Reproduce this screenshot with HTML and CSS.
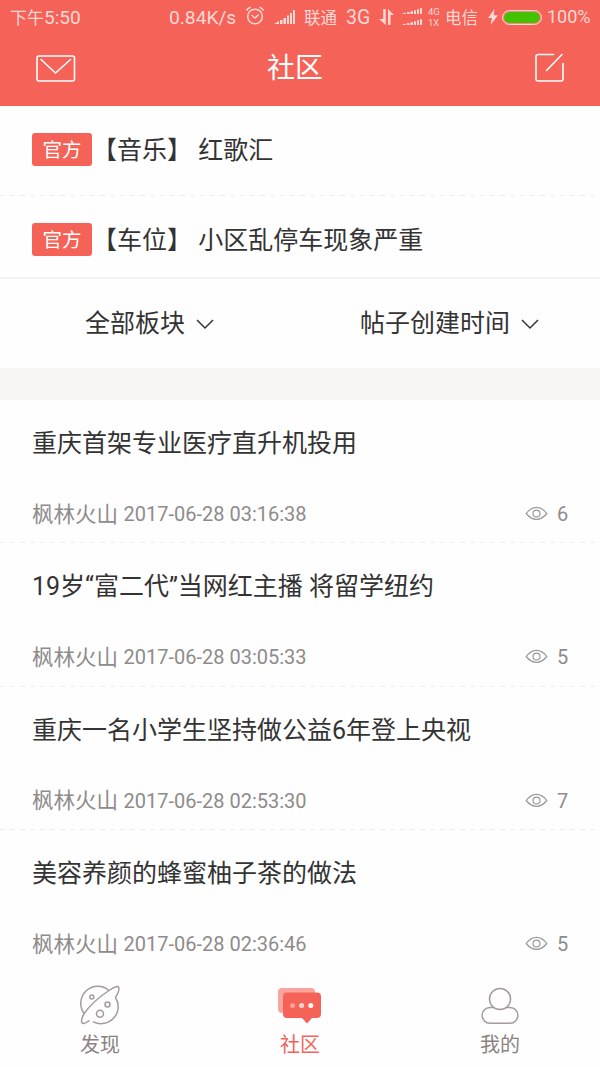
FILE: index.html
```html
<!DOCTYPE html>
<html lang="zh-CN">
<head>
<meta charset="utf-8">
<title>社区</title>
<link rel="stylesheet" href="styles.css">
</head>
<body>
<div class="app">
  <header class="top">
    <div class="status">
      <span class="clock"><span class="cn">下午</span>5:50</span>
      <span class="speed">0.84K/s</span>
      <svg class="alarm" width="20" height="20" viewBox="0 0 20 20" fill="none" stroke="currentColor" stroke-width="1.5"><circle cx="10" cy="10.5" r="7.3"/><path d="M6.5 9l3.5 3 3.7-3.4M1.5 4.5Q3 2 5.700 1.300M18.500 4.500Q17 2 14.300 1.300"/></svg>
      <svg class="signal" width="22" height="16" viewBox="0 0 22 16" fill="currentColor"><path d="M0 15l5-3v3zM6 11h2.500v4H6zM9.500 9H12v6H9.500zM13 6.500h2v8.500h-2zM16 4h2v11h-2zM19 1h2v14h-2z"/></svg>
      <span class="carrier">联通</span>
      <span class="net">3G</span>
      <svg class="arrows" width="16" height="16" viewBox="0 0 16 16" fill="currentColor"><path d="M4.200 0H6.700V16L0 10h4.200zM9 16V0l6 6h-3.500v10z"/></svg>
      <svg class="dual" width="22" height="18" viewBox="0 0 22 18" fill="currentColor"><path id="bars" d="M0 6l5-1.500V6zM6 4h2.500v2H6zM9.500 3.300H12V6H9.500zM13 2.200h2V6h-2zM16 1.200h2V6h-2zM19 .2h2V6h-2z"/><use href="#bars" y="11"/></svg>
      <span class="modes"><span>4G</span><span>1X</span></span>
      <span class="telecom">电信</span>
      <svg class="bolt" width="10" height="16" viewBox="0 0 10 16" fill="currentColor"><path d="M6.500 0L0 9h4L2.500 16 10 6.300H5.800z"/></svg>
      <span class="battery"></span>
      <span class="percent">100%</span>
    </div>
    <div class="nav">
      <svg class="mail" width="40" height="28" viewBox="0 0 40 28" fill="none" stroke="currentColor" stroke-width="1.600" stroke-linecap="round" stroke-linejoin="round"><rect x="1" y="1" width="37.500" height="25" rx="2"/><path d="M5 4.500L19.500 18 34.500 4.500"/></svg>
      <h1>社区</h1>
      <svg class="compose" width="30" height="30" viewBox="0 0 30 30" fill="none" stroke="currentColor" stroke-width="1.600" stroke-linecap="round" stroke-linejoin="round"><path d="M18.500 1.500H3q-2 0-2 2V26q0 2 2 2h23q2 0 2-2V10.500M11.500 17.500L27 1.500"/></svg>
    </div>
  </header>
  <section class="notices">
    <div class="notice"><span class="tag">官方</span><span>【音乐】 红歌汇</span></div>
    <div class="notice"><span class="tag">官方</span><span>【车位】 小区乱停车现象严重</span></div>
  </section>
  <div class="filters">
    <div class="filter">全部板块<svg width="18" height="11" viewBox="0 0 18 11"><path d="M1 1l8 8 8-8"/></svg></div>
    <div class="filter">帖子创建时间<svg width="18" height="11" viewBox="0 0 18 11"><path d="M1 1l8 8 8-8"/></svg></div>
  </div>
  <main class="posts">
    <article class="post"><h2>重庆首架专业医疗直升机投用</h2><div class="meta"><span class="author">枫林火山</span><time>2017-06-28 03:16:38</time><svg class="eye" width="23" height="15" viewBox="0 0 24 16"><path d="M1 8Q6 1.500 12 1.500T23 8Q18 14.300 12 14.300T1 8z"/><circle cx="12" cy="8" r="3.700"/></svg><span class="views">6</span></div></article>
    <article class="post"><h2>19岁“富二代”当网红主播 将留学纽约</h2><div class="meta"><span class="author">枫林火山</span><time>2017-06-28 03:05:33</time><svg class="eye" width="23" height="15" viewBox="0 0 24 16"><path d="M1 8Q6 1.500 12 1.500T23 8Q18 14.300 12 14.300T1 8z"/><circle cx="12" cy="8" r="3.700"/></svg><span class="views">5</span></div></article>
    <article class="post"><h2>重庆一名小学生坚持做公益6年登上央视</h2><div class="meta"><span class="author">枫林火山</span><time>2017-06-28 02:53:30</time><svg class="eye" width="23" height="15" viewBox="0 0 24 16"><path d="M1 8Q6 1.500 12 1.500T23 8Q18 14.300 12 14.300T1 8z"/><circle cx="12" cy="8" r="3.700"/></svg><span class="views">7</span></div></article>
    <article class="post"><h2>美容养颜的蜂蜜柚子茶的做法</h2><div class="meta"><span class="author">枫林火山</span><time>2017-06-28 02:36:46</time><svg class="eye" width="23" height="15" viewBox="0 0 24 16"><path d="M1 8Q6 1.500 12 1.500T23 8Q18 14.300 12 14.300T1 8z"/><circle cx="12" cy="8" r="3.700"/></svg><span class="views">5</span></div></article>
  </main>
  <nav class="tabs">
    <div class="tab"><svg width="44" height="40" viewBox="0 0 44 40" fill="none" stroke="currentColor" stroke-width="1.500" stroke-linecap="round"><path d="M31 5.500A17 17 0 0 0 6.200 28.500M37.500 12.500A17 17 0 0 1 15.500 36.800M31 5.500C36 2 40 .8 40.600 2.200C41.300 3.800 40 8.500 37.500 12.500M31 5.500C22 11.500 12 20 6.200 28.500C3.500 33 2.700 37.500 4.500 38.200C6 38.700 9 37.500 11 35.800"/><circle cx="13.800" cy="12" r="2"/><circle cx="29.500" cy="19.500" r="2.500"/><circle cx="22" cy="28.800" r="3.500"/></svg><span>发现</span></div>
    <div class="tab active"><svg width="44" height="40" viewBox="0 0 44 40"><rect x="0" y="3" width="37" height="25" rx="4" fill="#f9a49d"/><path d="M9 7.500H39q4 0 4 4V29q0 4-4 4H34l-5 5.500-5-5.500H9q-4 0-4-4V11.500q0-4 4-4z" fill="#f56258"/><circle cx="14.500" cy="20.500" r="2.500" fill="#f9a099"/><circle cx="23.600" cy="20.500" r="2.500" fill="#fdd5d2"/><circle cx="32.800" cy="20.500" r="2.500" fill="#fff"/></svg><span>社区</span></div>
    <div class="tab"><svg width="44" height="40" viewBox="0 0 44 40" fill="none" stroke="currentColor" stroke-width="1.500"><circle cx="22" cy="14" r="10.500"/><path d="M15.500 22.500H12A7.900 7.900 0 0 0 12 38.300H32A7.900 7.900 0 0 0 32 22.500H28.500"/></svg><span>我的</span></div>
  </nav>
</div>
</body>
</html>
```
FILE: styles.css
```css
* { box-sizing: border-box; }
body { margin: 0; background: #fefefe; color: #333; font-family: Roboto, "Noto Sans CJK SC", sans-serif; }
svg { display: block; flex: none; }
h1, h2 { margin: 0; font-weight: 400; }
.app { width: 600px; height: 1067px; display: flex; flex-direction: column; overflow: hidden; }

.top { height: 106px; background: #f56258; color: #fff; }
.status { height: 34px; display: flex; align-items: center; color: #fdd9d5; font-size: 18px; line-height: 34px; white-space: nowrap; }
.status > * { flex: none; }
.clock { width: 159px; margin-left: 10px; padding-top: 1px; font-size: 19px; }
.cn { font-size: 17px; }
.speed { width: 76px; padding-top: 1px; font-size: 19.200px; }
.alarm { width: 20px; margin-top: -2px; }
.signal { margin-left: 9px; }
.carrier { width: 42px; margin-left: 8px; padding-top: 3px; font-size: 16.500px; }
.net { width: 33px; padding-top: 1px; font-size: 19.500px; }
.arrows { width: 16px; }
.dual { margin-left: 6px; }
.modes { width: 17px; margin-left: 5px; display: flex; flex-direction: column; font-size: 9.500px; line-height: 11px; }
.telecom { width: 43px; padding-top: 3px; font-size: 16.500px; }
.bolt { width: 10px; }
.battery { width: 40px; height: 15px; margin-left: 4px; border: 1px solid #fdd9d5; border-radius: 8px; background: #43c300; background-clip: content-box; padding: 1px; box-shadow: inset 0 0 0 1px #f78b80; }
.percent { margin-left: 5px; font-size: 18px; }

.nav { height: 66px; display: grid; grid-template-columns: 40px 1fr 30px; align-items: center; padding: 3px 35px 0 36px; }
.nav h1 { margin-right: 21px; font-size: 28px; line-height: 40px; text-align: center; }
.compose { margin-top: -2px; }

.notices { height: 173px; border-bottom: 2px solid #f2f0f0; }
.notice { height: 90px; display: flex; align-items: center; padding: 0 32px 4px; font-size: 25px; line-height: 36px; }
.notice + .notice { height: 82px; padding-bottom: 0; padding-top: 4px; }
.notice:first-child, .post { background: repeating-linear-gradient(90deg, #eeecec 0 5px, transparent 5px 10px) bottom / 100% 1px no-repeat; }
.notice span:last-child { padding-top: 3px; }
.tag { width: 60px; height: 33px; border-radius: 3px; background: #f56258; color: #fff; font-size: 19.500px; line-height: 35px; text-align: center; }

.filters { height: 89px; display: flex; }
.filter { flex: 1; display: flex; align-items: center; justify-content: center; gap: 11px; padding: 1px 1px 0 0; font-size: 25px; line-height: 36px; }
.filter svg { fill: none; stroke: #333; stroke-width: 1.500; }

.posts { height: 607px; border-top: 32px solid #f6f5f4; }
.post { height: 143.400px; padding: 26px 32px 0; }
.post h2 { font-size: 25px; line-height: 36px; white-space: nowrap; }
.meta { height: 30px; margin-top: 37px; display: flex; align-items: center; color: #8f8b8b; font-size: 20px; line-height: 30px; }
.author { width: 91.500px; padding-top: 1px; font-size: 21.500px; }
.eye { margin-left: auto; margin-top: -1px; fill: none; stroke: #999; stroke-width: 1.300; }
.views { width: 11px; margin-left: 9px; }
.post:last-child { background: none; }

.tabs { flex: 1; display: grid; grid-template-columns: repeat(3, 1fr); }
.tab { display: flex; flex-direction: column; align-items: center; padding-top: 10px; color: #a69b99; font-size: 20px; line-height: 30px; }
.tab span { margin-top: 5px; color: #8b8381; }
.tab.active span { color: #f56258; }
```
